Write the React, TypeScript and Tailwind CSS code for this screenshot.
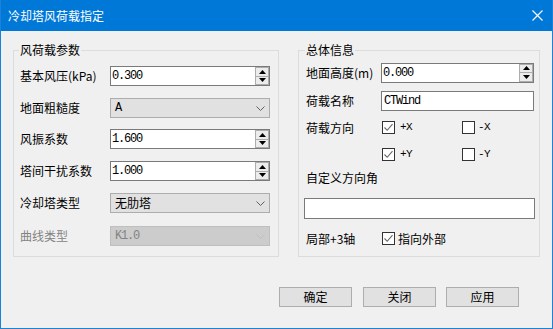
import React from "react";

const cjk = { fontFamily: '"Noto Sans CJK SC", "Microsoft YaHei", sans-serif' };
const mono = { fontFamily: '"Liberation Mono", "Noto Sans CJK SC", monospace' };

function Spin() {
  return (
    <div className="flex flex-col w-[14px] h-full">
      <div className="flex-1 flex items-center justify-center bg-[#ececec] border border-[#adadad]">
        <svg width="7" height="4" viewBox="0 0 7 4"><path d="M0 4 L3.5 0 L7 4 Z" fill="#000" /></svg>
      </div>
      <div className="flex-1 flex items-center justify-center bg-[#ececec] border border-t-0 border-[#adadad]">
        <svg width="7" height="4" viewBox="0 0 7 4"><path d="M0 0 L7 0 L3.5 4 Z" fill="#000" /></svg>
      </div>
    </div>
  );
}

function SpinInput({ value, w }: { value: string; w: string }) {
  return (
    <div className={`flex h-[20px] ${w} bg-white border border-[#7a7a7a] p-[0px]`}>
      <div className="flex-1 flex items-center pl-[1px] text-[12px] tracking-[-1.2px] text-black" style={mono}>{value}</div>
      <Spin />
    </div>
  );
}

function Chevron({ color }: { color: string }) {
  return (
    <svg width="9" height="5" viewBox="0 0 9 5"><path d="M0.5 0.5 L4.5 4.5 L8.5 0.5" fill="none" stroke={color} strokeWidth="1" /></svg>
  );
}

function Combo({ value, disabled, isCjk }: { value: string; disabled?: boolean; isCjk?: boolean }) {
  return (
    <div className={`flex items-center justify-between h-[20px] w-[160px] border pl-[4px] pr-[4px] ${disabled ? "bg-[#cccccc] border-[#bfbfbf] text-[#838383]" : "bg-[#e1e1e1] border-[#adadad] text-black"}`}>
      <span className={isCjk ? "text-[12px]" : "text-[12px] tracking-[-1.2px]"} style={isCjk ? cjk : mono}>{value}</span>
      <Chevron color={disabled ? "#bfbfbf" : "#606060"} />
    </div>
  );
}

function Check({ checked }: { checked: boolean }) {
  return (
    <div className="w-[13px] h-[13px] border border-[#333333] bg-white flex items-center justify-center shrink-0">
      {checked && (
        <svg width="11" height="11" viewBox="0 0 11 11"><path d="M1.5 5.5 L4.2 8.3 L9.5 2.2" fill="none" stroke="#666" strokeWidth="1.1" /></svg>
      )}
    </div>
  );
}

function LeftRow({ label, children, mt, dim }: { label: string; children: React.ReactNode; mt: string; dim?: boolean }) {
  return (
    <div className={`flex items-center h-[20px] ${mt}`}>
      <div className={`w-[90px] text-[12px] ${dim ? "text-[#838383]" : "text-black"}`} style={cjk}>{label}</div>
      {children}
    </div>
  );
}

export default function App() {
  return (
    <div className="w-[553px] h-[329px] bg-[#f0f0f0] border-x border-b border-[#1883d7] flex flex-col" style={cjk}>
      <div className="h-[31px] bg-[#0078d7] flex items-center justify-between pl-[7px] pr-[9px] shrink-0">
        <span className="text-white text-[12px] leading-[16px]" style={cjk}>冷却塔风荷载指定</span>
        <svg width="11" height="11" viewBox="0 0 11 11"><path d="M0.5 0.5 L10.5 10.5 M10.5 0.5 L0.5 10.5" stroke="#fff" strokeWidth="1.1" /></svg>
      </div>
      <div className="flex pl-[12px] pt-[11px] gap-[19px]">
        <fieldset className="w-[266px] h-[215px] border border-[#dcdcdc] flex flex-col">
          <legend className="ml-[5px] px-[1px] text-[12px] leading-[16px] text-black">风荷载参数</legend>
          <div className="flex flex-col pl-[6px]">
            <LeftRow label="基本风压(kPa)" mt="mt-[8px]"><SpinInput value="0.300" w="w-[160px]" /></LeftRow>
            <LeftRow label="地面粗糙度" mt="mt-[12px]"><Combo value="A" /></LeftRow>
            <LeftRow label="风振系数" mt="mt-[11px]"><SpinInput value="1.600" w="w-[160px]" /></LeftRow>
            <LeftRow label="塔间干扰系数" mt="mt-[12px]"><SpinInput value="1.000" w="w-[160px]" /></LeftRow>
            <LeftRow label="冷却塔类型" mt="mt-[12px]"><Combo value="无肋塔" isCjk /></LeftRow>
            <LeftRow label="曲线类型" mt="mt-[13px]" dim><Combo value="K1.0" disabled /></LeftRow>
          </div>
        </fieldset>
        <fieldset className="w-[242px] h-[215px] border border-[#dcdcdc] flex flex-col">
          <legend className="ml-[6px] px-[1px] text-[12px] leading-[16px] text-black">总体信息</legend>
          <div className="flex flex-col pl-[7px]">
            <div className="flex items-center h-[21px] mt-[4px]">
              <div className="w-[75px] text-[12px] text-black">地面高度(m)</div>
              <SpinInput value="0.000" w="w-[153px]" />
            </div>
            <div className="flex items-center h-[20px] mt-[8px]">
              <div className="w-[75px] text-[12px] text-black">荷载名称</div>
              <div className="h-[20px] w-[153px] bg-white border border-[#7a7a7a] flex items-center pl-[2px] text-[12px] tracking-[-1.2px] text-black" style={mono}>CTWind</div>
            </div>
            <div className="flex items-center h-[13px] mt-[10px]">
              <div className="w-[75px] text-[12px] text-black">荷载方向</div>
              <div className="ml-[1px] flex items-center w-[80px]"><Check checked /><span className="ml-[5px] text-[11px] tracking-[-0.6px] text-black" style={mono}>+X</span></div>
              <div className="flex items-center"><Check checked={false} /><span className="ml-[3px] text-[11px] tracking-[-0.6px] text-black" style={mono}>-X</span></div>
            </div>
            <div className="flex items-center h-[13px] mt-[14px]">
              <div className="w-[75px]" />
              <div className="ml-[1px] flex items-center w-[80px]"><Check checked /><span className="ml-[5px] text-[11px] tracking-[-0.6px] text-black" style={mono}>+Y</span></div>
              <div className="flex items-center"><Check checked={false} /><span className="ml-[3px] text-[11px] tracking-[-0.6px] text-black" style={mono}>-Y</span></div>
            </div>
            <div className="mt-[9px] h-[16px] leading-[16px] text-[12px] text-black">自定义方向角</div>
            <div className="mt-[12px] h-[21px] w-[231px] -ml-[2px] bg-white border border-[#7a7a7a]" />
            <div className="flex items-center h-[13px] mt-[13px]">
              <div className="w-[75px] text-[12px] text-black">局部+3轴</div>
              <div className="ml-[1px] flex items-center"><Check checked /><span className="ml-[3px] text-[12px] text-black">指向外部</span></div>
            </div>
          </div>
        </fieldset>
      </div>
      <div className="flex pl-[278px] mt-[30px]">
        <div className="w-[73px] h-[20px] bg-[#e1e1e1] border border-[#adadad] flex items-center justify-center text-[12px] text-black">确定</div>
        <div className="ml-[11px] w-[73px] h-[20px] bg-[#e1e1e1] border border-[#adadad] flex items-center justify-center text-[12px] text-black">关闭</div>
        <div className="ml-[10px] w-[73px] h-[20px] bg-[#e1e1e1] border border-[#adadad] flex items-center justify-center text-[12px] text-black">应用</div>
      </div>
    </div>
  );
}
